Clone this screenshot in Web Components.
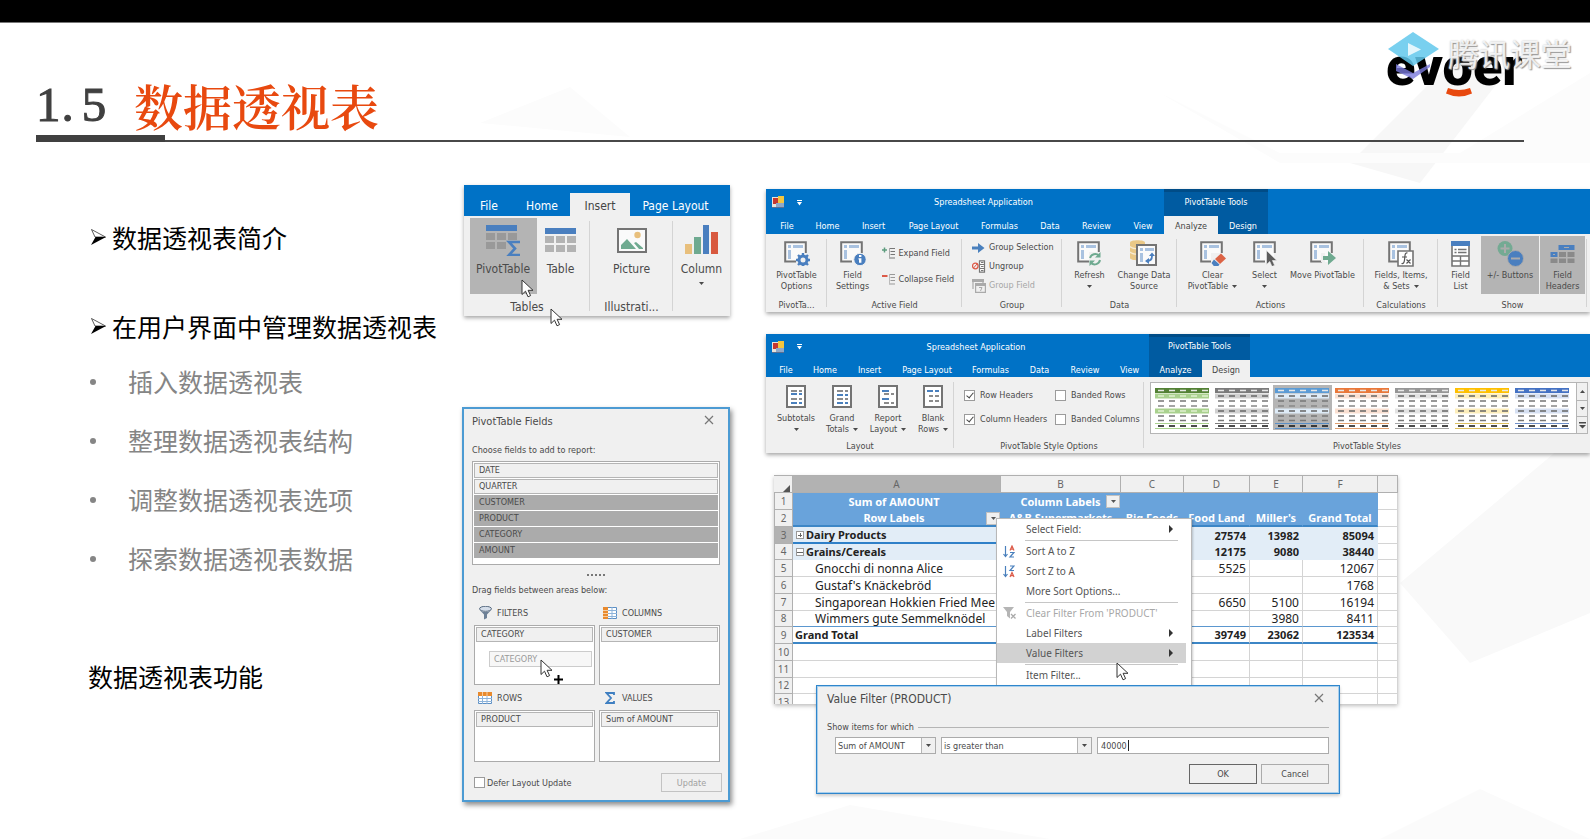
<!DOCTYPE html>
<html lang="zh-CN">
<head>
<meta charset="utf-8">
<meta name="viewport" content="width=device-width, initial-scale=1">
<title>1.5 数据透视表</title>
<style>
  html, body { margin: 0; min-height: 100%; background: #fff; }
  body { font-family: "Noto Sans CJK SC", "Noto Sans", sans-serif; }
</style>
</head>
<body>
<course-slide>
  <slide-title slot="title" number="1.5">数据透视表</slide-title>
  <brand-mark slot="brand"></brand-mark>
  <topic-list slot="topics"></topic-list>

  <ribbon-window slot="middle" class="compact" plain>
    <ribbon-tab slot="tabs" style="width:50px">File</ribbon-tab>
    <ribbon-tab slot="tabs" style="width:56px">Home</ribbon-tab>
    <ribbon-tab slot="tabs" style="width:60px" active>Insert</ribbon-tab>
    <ribbon-tab slot="tabs" style="width:91px">Page Layout</ribbon-tab>
    <ribbon-group caption="Tables" style="width:126px">
      <ribbon-button icon="big-pivot" style="width:67px" pressed>PivotTable</ribbon-button>
      <ribbon-button icon="big-table" style="width:48px">Table</ribbon-button>
    </ribbon-group>
    <ribbon-group caption="Illustrati..." style="width:83px">
      <ribbon-button icon="picture" style="width:70px">Picture</ribbon-button>
    </ribbon-group>
    <ribbon-group last caption="" style="width:57px">
      <ribbon-button icon="column" style="width:57px" arrow="below">Column</ribbon-button>
    </ribbon-group>
  </ribbon-window>
  <field-pane slot="middle"></field-pane>

  <ribbon-window slot="right" class="analyze" heading="Spreadsheet Application">
    <ribbon-tab slot="tabs" style="width:36px">File</ribbon-tab>
    <ribbon-tab slot="tabs" style="width:45px">Home</ribbon-tab>
    <ribbon-tab slot="tabs" style="width:47px">Insert</ribbon-tab>
    <ribbon-tab slot="tabs" style="width:73px">Page Layout</ribbon-tab>
    <ribbon-tab slot="tabs" style="width:59px">Formulas</ribbon-tab>
    <ribbon-tab slot="tabs" style="width:42px">Data</ribbon-tab>
    <ribbon-tab slot="tabs" style="width:51px">Review</ribbon-tab>
    <ribbon-tab slot="tabs" style="width:42px">View</ribbon-tab>
    <ribbon-tab slot="context" style="width:54px" active>Analyze</ribbon-tab>
    <ribbon-tab slot="context" style="width:50px">Design</ribbon-tab>
    <ribbon-group caption="PivotTa..." style="width:61px">
      <ribbon-button icon="options" style="width:58px">PivotTable<br>Options</ribbon-button>
    </ribbon-group>
    <ribbon-group caption="Active Field" style="width:135px">
      <ribbon-button icon="settings" style="width:50px">Field<br>Settings</ribbon-button>
      <ribbon-stack style="width:84px">
        <ribbon-link icon="expand">Expand Field</ribbon-link>
        <ribbon-link icon="collapse">Collapse Field</ribbon-link>
      </ribbon-stack>
    </ribbon-group>
    <ribbon-group caption="Group" style="width:100px">
      <ribbon-stack dense style="width:90px">
        <ribbon-link icon="group-sel">Group Selection</ribbon-link>
        <ribbon-link icon="ungroup">Ungroup</ribbon-link>
        <ribbon-link icon="group-field" off>Group Field</ribbon-link>
      </ribbon-stack>
    </ribbon-group>
    <ribbon-group caption="Data" style="width:115px">
      <ribbon-button icon="refresh" arrow="below" style="width:49px">Refresh</ribbon-button>
      <ribbon-button icon="source" style="width:60px">Change Data<br>Source</ribbon-button>
    </ribbon-group>
    <ribbon-group caption="Actions" style="width:187px">
      <ribbon-button icon="clear" arrow="inline" style="width:68px">Clear<br>PivotTable</ribbon-button>
      <ribbon-button icon="select" arrow="below" style="width:36px">Select</ribbon-button>
      <ribbon-button icon="move" style="width:80px">Move PivotTable</ribbon-button>
    </ribbon-group>
    <ribbon-group caption="Calculations" style="width:74px">
      <ribbon-button icon="calc" arrow="inline" style="width:72px">Fields, Items,<br>&amp; Sets</ribbon-button>
    </ribbon-group>
    <ribbon-group caption="Show" style="width:149px">
      <ribbon-button icon="field-list" style="width:41px">Field<br>List</ribbon-button>
      <ribbon-button icon="plus-minus" style="width:58px" pressed>+/- Buttons</ribbon-button>
      <ribbon-button icon="headers" style="width:45px; margin-left:1px" pressed>Field<br>Headers</ribbon-button>
    </ribbon-group>
  </ribbon-window>

  <ribbon-window slot="right" class="design" heading="Spreadsheet Application">
    <ribbon-tab slot="tabs" style="width:34px">File</ribbon-tab>
    <ribbon-tab slot="tabs" style="width:44px">Home</ribbon-tab>
    <ribbon-tab slot="tabs" style="width:45px">Insert</ribbon-tab>
    <ribbon-tab slot="tabs" style="width:70px">Page Layout</ribbon-tab>
    <ribbon-tab slot="tabs" style="width:57px">Formulas</ribbon-tab>
    <ribbon-tab slot="tabs" style="width:41px">Data</ribbon-tab>
    <ribbon-tab slot="tabs" style="width:50px">Review</ribbon-tab>
    <ribbon-tab slot="tabs" style="width:39px">View</ribbon-tab>
    <ribbon-tab slot="context" style="width:53px">Analyze</ribbon-tab>
    <ribbon-tab slot="context" style="width:48px" active>Design</ribbon-tab>
    <ribbon-group caption="Layout" style="width:188px">
      <ribbon-button icon="subtotals" arrow="below" style="width:54px">Subtotals</ribbon-button>
      <ribbon-button icon="grand" arrow="inline" style="width:38px">Grand<br>Totals</ribbon-button>
      <ribbon-button icon="report" arrow="inline" style="width:54px">Report<br>Layout</ribbon-button>
      <ribbon-button icon="blank" arrow="inline" style="width:36px">Blank<br>Rows</ribbon-button>
    </ribbon-group>
    <ribbon-group caption="PivotTable Style Options" style="width:190px">
      <style-options></style-options>
    </ribbon-group>
    <ribbon-group last grow caption="PivotTable Styles">
      <style-gallery></style-gallery>
    </ribbon-group>
  </ribbon-window>

  <pivot-sheet slot="right"></pivot-sheet>
</course-slide>

<script>
const UI = '"DejaVu Sans Condensed","DejaVu Sans",sans-serif';
const RESET = `:host,*{box-sizing:border-box} button{font:inherit;color:inherit;background:none;border:0;padding:0;margin:0;cursor:default}`;

/* Registers an element whose shadow root is cloned from a template. */
function component(name, css, html, init) {
  const tpl = document.createElement('template');
  tpl.innerHTML = `<style>${RESET}${css}</style>${typeof html === 'string' ? html : ''}`;
  customElements.define(name, class extends HTMLElement {
    constructor() {
      super();
      this.attachShadow({ mode: 'open' }).append(tpl.content.cloneNode(true));
    }
    connectedCallback() {
      if (this.ready) return;
      this.ready = true;
      if (typeof html === 'function') this.shadowRoot.innerHTML += html(this);
      if (init) init(this);
    }
  });
}

/* ---------- icons ---------- */
const sheetBase = `<path d="M1 1h20v20H1z" fill="#fafafa"/><path d="M12 20.5H1.2V1.2h20.6V12" fill="none" stroke="#747474" stroke-width="2"/><path d="M4 4h3v3H4zM9 4h10v3H9zM4 9h3v9H4z" fill="#a9c2e0"/>`;
const page = rows => `<path d="M1 1h18v21H1z" fill="#fff" stroke="#747474" stroke-width="2"/>${rows}`;
const bars = (y, c, x = 5, w = 6, x2 = 13, w2 = 3) => `<path d="M${x} ${y}h${w}v2h-${w}zM${x2} ${y}h${w2}v2h-${w2}z" fill="${c}"/>`;
const B = '#4a80bd', G = '#8c8c8c';
const ICONS = {
  'big-pivot': [35, 32, `<path d="M0 1h31v6H0z" fill="#4a7fbf"/><path d="M0 9h9v7H0zM11 9h9v7h-9zM22 9h9v7h-9zM0 18h9v7H0zM11 18h9v7h-9z" fill="#999"/><path d="M34 18H23l6 6.5-6 6.500h11" fill="none" stroke="#4a7fbf" stroke-width="2.600"/>`],
  'big-table': [31, 32, `<path d="M0 4h31v6H0z" fill="#4a7fbf"/><path d="M0 12h9v7H0zM11 12h9v7h-9zM22 12h9v7h-9zM0 21h9v7H0zM11 21h9v7h-9zM22 21h9v7h-9z" fill="#b3b3b3"/>`],
  'picture': [30, 32, `<path d="M1 5h28v23H1z" fill="#fafafa" stroke="#747474" stroke-width="2"/><circle cx="20.500" cy="11" r="3.200" fill="#e8bf7c"/><path d="M4 25v-4l6-6 9 10zM17 19l2-1 7 6v1h-4z" fill="#6faa90"/>`],
  'column': [34, 32, `<path d="M0 20h7v10H0z" fill="#e8bf7c"/><path d="M9 13h7v17H9z" fill="#6faa90"/><path d="M18 1h6v29h-6z" fill="#4a7fbf"/><path d="M26 8h7v22h-7z" fill="#d8593f"/>`],
  'options': [26, 25, sheetBase + `<circle cx="19" cy="19" r="4" fill="#f0f0f0" stroke="#4a7fbf" stroke-width="3"/><path d="M19 12v3M19 23v3M12 19h3M23 19h3M14 14l2 2M22 22l2 2M24 14l-2 2M14 24l2-2" stroke="#4a7fbf" stroke-width="2.400"/>`],
  'settings': [26, 25, sheetBase + `<circle cx="20" cy="18.500" r="6.200" fill="#4a7fbf" stroke="#f0f0f0"/><path d="M19 14h2.400v2H19zM18.500 17.300h2.900v4.500H19v-3.400h-.5z" fill="#fff"/>`],
  'refresh': [25, 25, sheetBase + `<path d="M12 11h13v14H12z" fill="#f0f0f0"/><path d="M13 17a5.500 5.500 0 0 1 9-2.500M23 19a5.500 5.500 0 0 1-9 3" fill="none" stroke="#6faa90" stroke-width="2"/><path d="M23.500 11v5.500H18zM12.500 25v-5.500H18z" fill="#6faa90"/>`],
  'source': [28, 27, `<path d="M0 2.500C0-.5 15-.5 15 2.500V18c0 3-15 3-15 0z" fill="#eac886"/><path d="M0 6.500c3 3 12 3 15 0M0 12c3 3 12 3 15 0" fill="none" stroke="#f7ecd6" stroke-width="1.500"/><path d="M7 5h19v20H7z" fill="#fafafa" stroke="#747474" stroke-width="2"/><path d="M10 8h3v3h-3zM15 8h9v3h-9zM10 13h3v9h-3z" fill="#a9c2e0"/><path d="M17 21c4 0 5-2 5-5" fill="none" stroke="#4a7fbf" stroke-width="1.800"/><path d="M19 16h6l-3-3.500zM19 18v6l-4-3z" fill="#4a7fbf"/>`],
  'clear': [26, 25, sheetBase + `<path d="M11 12h14v13H11z" fill="#f0f0f0"/><path d="M15 18l6-5.500 5 5-6 5.500z" fill="#dc6345"/><path d="M14 18.500l5.500 5-2 2.500h-3L11.500 22z" fill="#4a7fbf"/>`],
  'select': [24, 25, sheetBase + `<path d="M13.500 9.500v14l3.300-3 2.200 5 2.600-1.200-2.200-4.800h4.400z" fill="#5d5d5d" stroke="#f0f0f0" stroke-width=".6"/>`],
  'move': [26, 25, sheetBase + `<path d="M11 12h4v9h-4z" fill="#f0f0f0"/><path d="M13 15h5v-5l8 7-8 7v-5h-5z" fill="#6faa90"/>`],
  'calc': [26, 26, sheetBase + `<path d="M10 10h15v15H10z" fill="#fff" stroke="#747474" stroke-width="1.600"/><path d="M19.500 12c-3-1-2.500 4-3 7-.3 2.500-1 4-3 3.500M14 16h5M18.500 18.500l4 4M22.500 18.500l-4 4" fill="none" stroke="#555" stroke-width="1.200"/>`],
  'field-list': [19, 26, `<path d="M1 1h17v24H1z" fill="#fff" stroke="#747474" stroke-width="1.600"/><path d="M0 0h19v5H0z" fill="#4a7fbf"/><path d="M3.500 8.500h2M7 8.500h8.500M3.500 11.500h2M7 11.500h8.500" stroke="#747474" stroke-width="1.400"/><path d="M1 15h17M1 20h17M9.500 15v10" stroke="#747474" stroke-width="1.400"/>`],
  'plus-minus': [27, 26, `<circle cx="8" cy="7.500" r="7.500" fill="#74aa93"/><path d="M8 3v9M3.500 7.500h9" stroke="#ababab" stroke-width="2"/><circle cx="18.500" cy="17.500" r="8" fill="#4a7fbf" stroke="#ababab"/><path d="M14 17.500h9" stroke="#ababab" stroke-width="2"/>`],
  'headers': [25, 24, `<path d="M8.500 3h16v5h-16zM.5 10h7v5h-7z" fill="#4a7fbf"/><path d="M14 5.500h5M3 12.500h2" stroke="#ababab"/><path d="M9 10h7v5H9zM17.500 10h7v5h-7zM.5 16.500h7V21h-7zM9 16.500h7V21H9zM17.500 16.500h7V21h-7z" fill="#8a8a8a"/>`],
  'expand': [13, 13, `<path d="M2.500 .5v5M0 3h5" stroke="#5d9c7e" stroke-width="1.500"/><path d="M7 1.500h6M8.500 4.500H13M8.500 7.500H13M7 11h6" stroke="#777"/><path d="M7.500 1v10" stroke="#aaa"/>`],
  'collapse': [13, 13, `<path d="M0 3h5.500" stroke="#dc5a48" stroke-width="2"/><path d="M7 1.500h6M8.500 4.500H13M8.500 7.500H13M7 11h6" stroke="#999"/><path d="M7.500 1v10" stroke="#bbb"/>`],
  'group-sel': [13, 12, `<path d="M0 4.500h6V1l6.500 5L6 11V7.500H0z" fill="#4a80bd"/>`],
  'ungroup': [14, 13, `<circle cx="3.300" cy="6" r="2.800" fill="none" stroke="#dc5a48" stroke-width="1.300"/><path d="M1.500 8l3.500-4" stroke="#dc5a48"/><path d="M7.500.8h5v11.400h-5z" fill="#fff" stroke="#777" stroke-width="1.200"/><path d="M8 4.500h4.500M8 8.500h4.500M9 2.500h2.500M9 6.500h2.500M9 10.500h2.500" stroke="#777"/>`],
  'group-field': [14, 14, `<path d="M1 10V1h10v3" fill="none" stroke="#aaa" stroke-width="1.200"/><path d="M0 0h12v3H0zM3 4h11v3H3z" fill="#aaa"/><path d="M3.600 5h9.800v8.400H3.600z" fill="none" stroke="#aaa" stroke-width="1.200"/><path d="M7 8.500h3l-1.500 3.500" fill="none" stroke="#aaa"/>`],
  'subtotals': [20, 23, page(bars(5, G) + bars(8, B) + bars(13, G) + bars(17, B))],
  'grand': [20, 23, page(bars(5, G) + bars(9, B) + bars(13, G) + bars(17, B))],
  'report': [20, 23, page(bars(5, B, 4, 7, 4, 7) + bars(8, G, 6, 5, 13, 3) + bars(13, B, 4, 7, 4, 7) + bars(17, G, 6, 5, 13, 3))],
  'blank': [20, 23, page(bars(5, B, 4, 6, 12, 4) + bars(10, G, 6, 4, 12, 4) + bars(15, G, 6, 4, 12, 4))],
  'app': [13, 13, `<path d="M0 1h7v10H0z" fill="#e9e4da"/><path d="M1 2h5v6H1z" fill="#c6372f"/><path d="M6 0h6v7H6z" fill="#f3c63f"/><path d="M4 7h8v5H4z" fill="#8fa9c9"/><path d="M0 11h12v1H0z" fill="#5a6f92"/>`],
  'qat': [5, 6, `<path d="M0 0h5v1H0zM0 2h5L2.500 5.500z" fill="#fff"/>`],
  'funnel': [13, 14, `<ellipse cx="6.500" cy="2.800" rx="6" ry="2.500" fill="#d5deea" stroke="#56697f"/><path d="M.7 4C4 6.500 9 6.500 12.300 4L8 8.500V12l-3 1.500v-5z" fill="#6d8096"/>`],
  'cols': [14, 12, `<path d="M.5.5h13v11H.5z" fill="#fff" stroke="#5c8fc4"/><path d="M0 0h5v12H0z" fill="#e88a2e"/><path d="M0 3.500h5M0 6.500h5M0 9.500h5" stroke="#f7cda0"/><path d="M9 0v12M5 3.500h9M5 6.500h9M5 9.500h9" stroke="#8db3da"/>`],
  'rows': [14, 12, `<path d="M.5.5h13v11H.5z" fill="#fff" stroke="#5c8fc4"/><path d="M0 0h14v4H0z" fill="#e88a2e"/><path d="M4.500 0v4M9 0v4" stroke="#f7cda0"/><path d="M4.500 4v8M9 4v8M0 6.500h14M0 9.500h14" stroke="#8db3da"/>`],
  'sigma': [10, 12, `<path d="M9 3V1H1.500L6 6l-4.500 5H9V9" fill="none" stroke="#3f7fc1" stroke-width="1.800"/>`],
  'close': [10, 10, `<path d="M1 1l8 8M9 1L1 9" stroke="#777" stroke-width="1.200"/>`],
  'sort-az': [12, 13, `<path d="M2.500 1v10M.5 9l2 2.500 2-2.500" fill="none" stroke="#4a80bd" stroke-width="1.200"/><path d="M7 5.500L9 1l2 4.500M7.700 4.200h2.600" fill="none" stroke="#dc5a48" stroke-width="1.200"/><path d="M7 7.500h4L7 12h4" fill="none" stroke="#4a80bd" stroke-width="1.200"/>`],
  'sort-za': [12, 13, `<path d="M2.500 1v10M.5 9l2 2.500 2-2.500" fill="none" stroke="#4a80bd" stroke-width="1.200"/><path d="M7 1h4L7 5.500h4" fill="none" stroke="#4a80bd" stroke-width="1.200"/><path d="M7 12l2-4.500 2 4.500M7.700 10.700h2.600" fill="none" stroke="#dc5a48" stroke-width="1.200"/>`],
  'clear-filter': [13, 12, `<path d="M0 0h11L7 5v6.500L4 9V5z" fill="#b5b5b5"/><path d="M8 7l4.500 4.500M12.500 7L8 11.500" stroke="#aaa" stroke-width="1.300"/>`],
  'right': [4, 8, `<path d="M0 0l4 4-4 4z" fill="#333"/>`],
  'down': [5, 3, `<path d="M0 0h5L2.500 3z" fill="currentColor"/>`],
  'up': [5, 3, `<path d="M0 3h5L2.500 0z" fill="currentColor"/>`],
  'more': [7, 7, `<path d="M0 0h7v1.500H0zM0 3h7L3.500 6.500z" fill="currentColor"/>`],
  'pointer': [13, 19, `<path d="M1 1v14.500l3.500-3.300 2.500 5.600 2.600-1.200-2.500-5.300H12z" fill="#fff" stroke="#333"/>`],
  'arrowhead': [17, 18, `<path d="M1.500 1.500L15.500 9 5 9z" fill="#fff" stroke="#333" stroke-width=".8"/><path d="M5.500 9H16L1 17z" fill="#000"/>`]
};
component('ui-icon', `:host{display:inline-block;line-height:0;flex:none} svg{display:block}`,
  el => { const [w, h, d] = ICONS[el.getAttribute('name')]; return `<svg width="${w}" height="${h}" viewBox="0 0 ${w} ${h}" aria-hidden="true">${d}</svg>`; });

/* ---------- slide frame ---------- */
component('course-slide', `
  :host{display:block;position:relative;min-height:100vh;overflow:hidden;background:#fff}
  .bar{height:23px;background:#000;border-bottom:1px solid #777}
  .facets{position:absolute;inset:23px 0 0;width:100%;height:calc(100% - 23px);z-index:0}
  .page{position:relative}
  .body{display:flex;align-items:flex-start;padding:43px 0 28px 88px}
  .topics{flex:0 0 376px}
  .middle{flex:0 0 266px;display:flex;flex-direction:column;gap:91px}
  .right{flex:1 1 0;min-width:0;margin:4px 0 0 36px;display:flex;flex-direction:column;gap:22px}
`, `
  <div class="bar"></div>
  <svg class="facets" viewBox="0 0 1590 816" preserveAspectRatio="none" aria-hidden="true">
    <path d="M1350 140l110-110 45 20-85 110z" fill="#f7f7f7"/><path d="M1160 70l120 60h180l130-80v90H1280z" fill="#fcfcfc"/>
    <path d="M480 100l90-36 60 50z" fill="#fcfcfc"/><path d="M1400 560l190-160v190l-120 50z" fill="#f9f9f9"/>
    <path d="M740 816l110-34 200 34zM1380 816l100-50 110 50z" fill="#fbfbfb"/>
  </svg>
  <div class="page">
    <slot name="title"></slot>
    <slot name="brand"></slot>
    <div class="body">
      <div class="topics"><slot name="topics"></slot></div>
      <div class="middle"><slot name="middle"></slot></div>
      <div class="right"><slot name="right"></slot></div>
    </div>
  </div>`);

component('slide-title', `
  :host{display:block;padding:48px 66px 0 36px}
  h1{margin:0;height:64px;font-weight:600;font-size:49px;line-height:64px;padding-top:4px;color:#e8490f;display:flex;align-items:center;
     font-family:"Noto Serif CJK SC","Liberation Serif","Noto Sans CJK SC",serif}
  .n{color:#404040;width:98px;white-space:pre;font-family:"Liberation Serif",serif;font-weight:400;-webkit-text-stroke:1px #404040}
  .dot{margin:0 8px 0 1px}
  .rule{height:7px;border-bottom:2px solid #484848}
  .rule i{display:block;width:129px;height:7px;background:#404040}
`, el => { const [a, b] = el.getAttribute('number').split('.'); return `<h1><span class="n">${a}<span class="dot">.</span>${b}</span><slot></slot></h1><div class="rule"><i></i></div>`; });

component('brand-mark', `
  :host{position:absolute;top:8px;right:12px;width:192px;height:70px}
  .word{position:absolute;left:0;top:3px;font:900 54px/66px Roboto,sans-serif;color:#000}
  svg{position:absolute;left:2px;top:0}
  .mark{position:absolute;left:62px;top:2px;font:400 31px/40px "Noto Sans CJK SC",sans-serif;color:rgba(255,255,255,.82);text-shadow:1px 1px 1px #999,0 0 2px #bbb;white-space:nowrap}
`, `
  <span class="word">evoer</span>
  <svg width="60" height="68" viewBox="0 0 60 68" aria-hidden="true">
    <path d="M8 33l17 9 17-9v3L25 48 8 40z" fill="#7b7bdc" opacity=".8"/>
    <path d="M0 18L25 1l26 17-26 17z" fill="#62c8ec" opacity=".85"/>
    <path d="M20 12l13 6.500L20 25z" fill="#fff" opacity=".8"/>
  </svg>
  <svg width="100" height="70" viewBox="0 0 100 70" aria-hidden="true"><path d="M60 57q11 4 22 0l2 5.500q-13 6-26 0z" fill="#e8490f"/></svg>
  <span class="mark">腾讯课堂</span>`);

component('topic-list', `
  :host{display:block;padding-top:34px;font:400 25px/36px "Noto Sans CJK SC",sans-serif;color:#000}
  ul{list-style:none;margin:0;padding:0}
  .top > li + li{margin-top:53px}
  .head{display:flex;align-items:center;gap:5px;margin-left:2px}
  .sub{margin-top:8px;color:#858585;line-height:59px}
  .sub li{display:flex;align-items:center;gap:32px;padding-left:2px}
  .sub li::before{content:"";width:6px;height:6px;border-radius:50%;background:#858585;flex:none}
  p{margin:70px 0 0}
`, `
  <ul class="top">
    <li><span class="head"><ui-icon name="arrowhead"></ui-icon><span>数据透视表简介</span></span></li>
    <li><span class="head"><ui-icon name="arrowhead"></ui-icon><span>在用户界面中管理数据透视表</span></span>
      <ul class="sub"><li>插入数据透视表</li><li>整理数据透视表结构</li><li>调整数据透视表选项</li><li>探索数据透视表数据</li></ul>
    </li>
  </ul>
  <p>数据透视表功能</p>`);

/* ---------- ribbon ---------- */
component('ribbon-window', `
  :host{--fs:9px;--title:27px;--tab:18px;--content:62px;--icon:25px;--pad:5px;--gap:4px;--lh:11px;--cap:16px;
        display:block;position:relative;font:var(--fs)/var(--lh) ${UI};color:#4a4a4a;background:#f0f0f0;box-shadow:0 2px 4px rgba(0,0,0,.35)}
  :host(.design){--title:26px;--tab:17px;--content:60px}
  :host(.compact){--fs:12px;--tab:31px;--content:80px;--icon:32px;--pad:6px;--gap:6px;--lh:14px;--cap:20px}
  .top{display:flex;background:#0072c6;color:#fff}
  .head{height:var(--title);display:flex;align-items:center}
  .qat{width:37px;padding-left:6px;display:flex;gap:12px;align-items:center}
  .title{flex:1;text-align:center}
  .tabs{display:flex;height:var(--tab);padding-left:3px}
  .ctx{background:#005ba1;border-top:3px solid #004c87}
  .ctx .head{height:calc(var(--title) - 3px);justify-content:center;padding-bottom:4px}
  .ctx .tabs{padding:0}
  :host([plain]) .head,:host([plain]) .ctx{display:none}
  :host([plain]) .tabs{padding:8px 0 0 0}
  .body{display:flex}
  .pointers ui-icon{position:absolute}
  .pointers .a{left:57px;top:94px}.pointers .b{left:86px;top:123px}
  :host(:not([plain])) .pointers{display:none}
`, el => `
  <div class="top">
    <div><div class="head"><span class="qat"><ui-icon name="app"></ui-icon><ui-icon name="qat"></ui-icon></span><span class="title">${el.getAttribute('heading') || ''}</span></div>
      <div class="tabs"><slot name="tabs"></slot></div></div>
    <div class="ctx">${el.hasAttribute('plain') ? '' : '<div class="head">PivotTable Tools</div>'}<div class="tabs"><slot name="context"></slot></div></div>
  </div>
  <div class="body"><slot></slot></div>
  <div class="pointers">${el.hasAttribute('plain') ? '<ui-icon class="a" name="pointer"></ui-icon><ui-icon class="b" name="pointer"></ui-icon>' : ''}</div>`);

component('ribbon-tab', `
  :host{display:block;flex:none}
  button{width:100%;height:100%;text-align:center;white-space:nowrap;padding-top:3px}
  :host([active]) button{background:#f0f0f0;color:#444}
`, `<button type="button"><slot></slot></button>`);

component('ribbon-group', `
  :host{display:flex;flex:none;flex-direction:column;background:linear-gradient(#d4d4d4,#d4d4d4) right 5px/1px calc(100% - 10px) no-repeat}
  :host([last]){background:none}
  :host([grow]){flex:1 1 0;min-width:0}
  .c{display:flex;justify-content:center;height:var(--content)}
  .cap{height:var(--cap);line-height:var(--cap);padding-top:1px;text-align:center;white-space:nowrap}
`, el => `<div class="c"><slot></slot></div><div class="cap">${el.getAttribute('caption')}</div>`);

component('ribbon-button', `
  :host{display:block;flex:none}
  button{display:flex;flex-direction:column;align-items:center;width:100%;height:calc(100% - 4px);margin-top:2px;padding-top:var(--pad);white-space:nowrap}
  :host([pressed]) button{background:#b4b4b4}
  .i{height:var(--icon);margin-bottom:var(--gap);display:flex;align-items:center}
  .t ui-icon{vertical-align:middle;margin-left:4px}
  .d{height:var(--lh);display:flex;align-items:center}
`, el => {
  const a = el.getAttribute('arrow');
  return `<button type="button"><span class="i"><ui-icon name="${el.getAttribute('icon')}"></ui-icon></span><span class="t"><slot></slot>${a === 'inline' ? '<ui-icon name="down"></ui-icon>' : ''}</span>${a === 'below' ? '<span class="d"><ui-icon name="down"></ui-icon></span>' : ''}</button>`;
});

component('ribbon-stack', `
  :host{display:grid;grid-auto-rows:26px;padding:6px 0 0 4px;flex:none}
  :host([dense]){grid-auto-rows:19px;padding:4px 0 0 5px}
`, `<slot></slot>`);

component('ribbon-link', `
  :host{display:flex}
  button{display:flex;align-items:center;white-space:nowrap}
  .i{width:17px;display:flex}
  :host([off]) button{color:#a6a6a6}
`, el => `<button type="button"><span class="i"><ui-icon name="${el.getAttribute('icon')}"></ui-icon></span><slot></slot></button>`);

const CHECK = `
  input[type=checkbox]{appearance:none;width:11px;height:11px;margin:0;border:1px solid #9b9b9b;background:#fff;position:relative;flex:none}
  input[type=checkbox]:checked::before{content:"";position:absolute;left:3px;top:0;width:3px;height:6px;border:solid #444;border-width:0 1px 1px 0;transform:rotate(40deg)}`;

component('style-options', `${CHECK}
  :host{display:grid;grid-template-columns:91px 89px;grid-auto-rows:24px;padding:6px 0 0 10px;width:190px}
  label{display:flex;align-items:center;gap:5px;white-space:nowrap}
`, `
  <label><input type="checkbox" checked>Row Headers</label><label><input type="checkbox">Banded Rows</label>
  <label><input type="checkbox" checked>Column Headers</label><label><input type="checkbox">Banded Columns</label>`);

component('style-gallery', `
  :host{display:flex;flex:1;min-width:0;height:52px;margin:5px 2px 0 6px;border:1px solid #b5b5b5;background:#fff}
  .list{flex:1;min-width:0;display:flex;gap:1px;padding:2px 0 0 2px;overflow:hidden}
  .list button{width:59px;height:45px;flex:none;padding:3px 2px 0}
  .list button.on{background:#b5b5b5}
  .scroll{width:11px;flex:none;display:grid;grid-template-rows:1fr 1fr 1fr;border-left:1px solid #b5b5b5;background:#f0f0f0}
  .scroll button{display:flex;align-items:center;justify-content:center}
  .scroll button + button{border-top:1px solid #b5b5b5}
  svg{display:block}
`, () => {
  const themes = [['green', '#538135', '#a9d18e', '#a9d18e'], ['dark grey', '#7b7b7b', '#d0d0d0', '#7b7b7b'], ['blue', '#5b9bd5', '#deebf7', '#5b8fc5'], ['orange', '#e9783a', '#fae0d2', '#e0a070'], ['grey', '#969696', '#e3e3e3', '#a5a5a5'], ['gold', '#ffc000', '#fdeebb', '#dcc060'], ['indigo', '#4472c4', '#d6e0f2', '#7090c8']];
  const thumb = ([name, h, band, line], i) => {
    const dash = (y, c) => `<path d="M3 ${y}h50" stroke="${c}" stroke-dasharray="6 5" stroke-width="1.500"/>`;
    const bandBlock = y => `<path d="M0 ${y - 2.500}h54v5H0z" fill="${band}"/>`;
    return `<button type="button" class="${i === 2 ? 'on' : ''}" aria-label="${name}"><svg width="55" height="42" viewBox="0 0 55 42" aria-hidden="true">
      <path d="M0 0h54v5H0z" fill="${h}"/>${dash(2.500, '#e8e8e8')}${bandBlock(8)}${dash(8, i ? '#666' : '#dff0d0')}${dash(13, '#777')}${dash(18, '#888')}${bandBlock(23)}${dash(23, i ? '#666' : '#dff0d0')}
      ${dash(28, '#777')}${dash(32.500, '#777')}<path d="M0 35.500h54M0 40.500h54" stroke="${line}"/>${dash(38, '#111')}</svg></button>`;
  };
  return `<div class="list">${themes.map(thumb).join('')}</div>
  <div class="scroll"><button type="button" aria-label="Up"><ui-icon name="up"></ui-icon></button><button type="button" aria-label="Down"><ui-icon name="down"></ui-icon></button><button type="button" aria-label="More"><ui-icon name="more"></ui-icon></button></div>`;
});

/* ---------- field list pane ---------- */
component('field-pane', `${CHECK}
  :host{display:block;position:relative;margin-left:-2px;width:268px;border:2px solid #4c9bd3;background:#f0f0f0;padding:6px 8px 8px;font:9px/12px ${UI};color:#4a4a4a;box-shadow:2px 3px 5px rgba(0,0,0,.45)}
  header{display:flex;justify-content:space-between;align-items:center;font-size:11px;line-height:13px;padding-right:6px}
  p{margin:16px 0 0}
  ul{list-style:none;margin:0;padding:1px;border:1px solid #ababab;background:#fff}
  li{height:15px;line-height:13px;padding-left:4px;border:1px solid #b5b5b5;background:#f0f0f0}
  li + li{margin-top:1px}
  .all{margin-top:5px;height:104px}
  .used{background:#ababab;border-color:#ababab}
  .grip{display:flex;justify-content:center;gap:2px;margin:9px 0 0}
  .grip i{width:2px;height:2px;background:#777}
  .grip + p{margin-top:8px}
  .areas{display:grid;grid-template-columns:1fr 1fr;column-gap:4px;margin:5px 0 0 2px}
  .areas section{display:flex;flex-direction:column}
  h3{margin:0;height:24px;display:flex;align-items:center;gap:5px;font:inherit;padding-left:4px}
  h3 ui-icon{width:14px;display:flex;justify-content:center}
  .areas section:nth-child(n+3) h3{height:25px}
  .areas section:nth-child(-n+2) ul{height:60px}
  .areas section:nth-child(n+3) ul{height:52px}
  .foot{display:flex;justify-content:space-between;align-items:center;margin:11px -2px 0 2px}
  label{display:flex;align-items:center;gap:2px}
  .foot button{width:61px;height:19px;border:1px solid #c3c3c3;color:#a0a0a0}
  .ghost{position:absolute;left:25px;top:242px;width:103px;height:16px;border:1px solid #ccc;background:rgba(245,245,245,.8);color:#999;padding-left:4px;line-height:14px}
  .ptr{position:absolute;left:76px;top:250px}
  .plus{position:absolute;left:90px;top:266px}
`, `
  <header><span>PivotTable Fields</span><button type="button" aria-label="Close"><ui-icon name="close"></ui-icon></button></header>
  <p>Choose fields to add to report:</p>
  <ul class="all"><li>DATE</li><li>QUARTER</li><li class="used">CUSTOMER</li><li class="used">PRODUCT</li><li class="used">CATEGORY</li><li class="used">AMOUNT</li></ul>
  <div class="grip"><i></i><i></i><i></i><i></i><i></i></div>
  <p>Drag fields between areas below:</p>
  <div class="areas">
    <section><h3><ui-icon name="funnel"></ui-icon>FILTERS</h3><ul><li>CATEGORY</li></ul></section>
    <section><h3><ui-icon name="cols"></ui-icon>COLUMNS</h3><ul><li>CUSTOMER</li></ul></section>
    <section><h3><ui-icon name="rows"></ui-icon>ROWS</h3><ul><li>PRODUCT</li></ul></section>
    <section><h3><ui-icon name="sigma"></ui-icon>VALUES</h3><ul><li>Sum of AMOUNT</li></ul></section>
  </div>
  <div class="foot"><label><input type="checkbox">Defer Layout Update</label><button type="button" disabled>Update</button></div>
  <div class="ghost">CATEGORY</div>
  <ui-icon class="ptr" name="pointer"></ui-icon>
  <svg class="plus" width="9" height="9" aria-hidden="true"><path d="M4.500 0v9M0 4.500h9" stroke="#000" stroke-width="2"/></svg>`);

/* ---------- worksheet ---------- */
component('pivot-sheet', `
  :host{display:block;position:relative;width:624px;margin-left:8px;height:229px;font:12px/16px "Noto Sans",sans-serif;color:#222}
  .clip{height:229px;overflow:hidden;background:#fff;box-shadow:0 2px 4px rgba(0,0,0,.25)}
  table{border-collapse:separate;border-spacing:0;table-layout:fixed;width:624px}
  th,td{padding:0 3px 0 0;height:17px;line-height:15px;border:solid #d4d4d4;border-width:0 1px 1px 0;text-align:right;white-space:nowrap;overflow:hidden;font-weight:400}
  tr:nth-child(4n) > *{height:16px}
  thead th,tbody th{background:#f0f0f0;color:#666;text-align:center;padding:0;font-size:10px;border-color:#b0b0b0}
  thead th{height:18px;border-top:1px solid #b0b0b0}
  tbody th{border-left:1px solid #b0b0b0}
  .sel{background:#b2b2b2!important}
  td:nth-child(2){text-align:left;padding-left:22px;border-left:0}
  .b td{font-weight:700;font-size:11px}
  .b td:nth-child(2){padding-left:2px}
  .h td{background:#69a3db;color:#fff;font-weight:700;font-size:11px;border-color:#69a3db;text-align:center;padding:0;position:relative}
  .h td:nth-child(2){padding:0 5px 0 0;text-align:center}
  .light td{background:#e2edf7;border-color:#e2edf7}
  .h td:last-child,.light td:last-child{background:#fff;border-color:#d4d4d4}
  .l td{border-bottom:2px solid #3c86c6}
  .l td:last-child{border-bottom:1px solid #d4d4d4}
  .l3 td:nth-child(2){border-bottom:2px solid #2f80c8}
  .l8 td:not(:last-child){border-bottom:1px solid #5b97cf}
  .box{display:inline-block;width:8px;height:8px;border:1px solid #999;margin:0 2px 0 1px;background:linear-gradient(#666,#666) center/6px 1px no-repeat #fff}
  .plus{background:linear-gradient(#666,#666) center/4px 1px no-repeat,linear-gradient(#666,#666) center/1px 4px no-repeat,#fff}
  .drop{position:absolute;right:0;top:2px;width:14px;height:13px;background:#f0f0f0;border:1px solid #c0c0c0;color:#555;display:flex;align-items:center;justify-content:center}
  filter-menu{position:absolute;left:222px;top:43px}
  value-filter-dialog{position:absolute;left:42px;top:210px}
  .ptr{position:absolute;left:342px;top:187px}
`, () => {
  const drop = `<button type="button" class="drop" aria-label="Filter"><ui-icon name="down"></ui-icon></button>`;
  const rows = [
    ['h', 'Sum of AMOUNT', 'Column Labels' + drop, '', '', '', ''],
    ['h l', 'Row Labels' + drop, 'A&amp;B Supermarkets', 'Big Foods', 'Food Land', "Miller's", 'Grand Total'],
    ['b light l3', '<span class="box plus"></span>Dairy Products', '', '', '27574', '13982', '85094'],
    ['b light', '<span class="box"></span>Grains/Cereals', '', '', '12175', '9080', '38440'],
    ['', 'Gnocchi di nonna Alice', '', '', '5525', '', '12067'],
    ['', "Gustaf's Knäckebröd", '', '', '', '', '1768'],
    ['', 'Singaporean Hokkien Fried Mee', '', '', '6650', '5100', '16194'],
    ['l8', 'Wimmers gute Semmelknödel', '', '', '', '3980', '8411'],
    ['b l', 'Grand Total', '', '', '39749', '23062', '123534'],
    ...Array(4).fill(['', '', '', '', '', '', ''])
  ];
  return `<div class="clip"><table>
    <colgroup><col style="width:19px"><col style="width:208px"><col style="width:120px"><col style="width:63px"><col style="width:66px"><col style="width:53px"><col style="width:75px"><col style="width:20px"></colgroup>
    <thead><tr><th><svg width="7" height="7" aria-hidden="true" style="vertical-align:bottom;margin-left:6px"><path d="M7 0v7H0z" fill="#555"/></svg></th><th class="sel">A</th><th>B</th><th>C</th><th>D</th><th>E</th><th>F</th><th></th></tr></thead>
    <tbody>${rows.map(([c, ...v], i) => `<tr class="${c}"><th class="${i === 2 ? 'sel' : ''}">${i + 1}</th>${v.map(x => `<td>${x}</td>`).join('')}<td></td></tr>`).join('')}</tbody>
  </table></div>
  <filter-menu></filter-menu><ui-icon class="ptr" name="pointer"></ui-icon><value-filter-dialog></value-filter-dialog>`;
});

component('filter-menu', `
  :host{display:block;width:196px;height:170px;background:#fff;border:1px solid #b8b8b8;box-shadow:1px 1px 2px rgba(0,0,0,.2);font:10px/20px "Noto Sans",sans-serif;color:#555}
  button{display:flex;align-items:center;width:189px;height:20px;text-align:left}
  .i{width:29px;padding-left:6px;display:flex}
  .t{flex:1}
  .r{width:17px;display:flex}
  hr{height:1px;border:0;background:#c6c6c6;margin:1px 13px 0 28px}
  .off{color:#a8a8a8}.on{background:#d2d2d2}
`, () => {
  const item = (t, icon, sub, c = '') => `<button type="button" class="${c}"><span class="i">${icon ? `<ui-icon name="${icon}"></ui-icon>` : ''}</span><span class="t">${t}</span><span class="r">${sub ? '<ui-icon name="right"></ui-icon>' : ''}</span></button>`;
  return item('Select Field:', '', 1) + '<hr>' + item('Sort A to Z', 'sort-az') + item('Sort Z to A', 'sort-za') + item('More Sort Options...') + '<hr>' +
    item("Clear Filter From 'PRODUCT'", 'clear-filter', 0, 'off') + item('Label Filters', '', 1) + item('Value Filters', '', 1, 'on') + '<hr>' + item('Item Filter...');
});

component('value-filter-dialog', `
  :host{display:block;width:524px;height:109px;background:#f0f0f0;border:1px solid #2f86cc;outline:1px solid #a9cfec;outline-offset:-2px;box-shadow:0 2px 3px rgba(0,0,0,.2);font:9px/12px ${UI};color:#4a4a4a;padding:5px 10px 0}
  header{display:flex;justify-content:space-between;align-items:center;font-size:12px;line-height:16px;padding-right:5px}
  fieldset{border:0;margin:14px 0 0;padding:0;min-width:0}
  legend{display:flex;align-items:center;gap:4px;width:100%;padding:0}
  legend::after{content:"";flex:1;height:1px;background:#b5b5b5}
  .row{display:flex;gap:5px;margin:4px 0 0 8px}
  .sel{position:relative;display:block}
  .sel ui-icon{position:absolute;right:5px;top:7px;pointer-events:none}
  .sel::after{content:"";position:absolute;right:14px;top:1px;width:1px;height:15px;background:#b5b5b5}
  select,input{appearance:none;font:inherit;color:inherit;width:100%;height:17px;margin:0;padding:0 2px;border:1px solid #ababab;border-radius:0;background:#fff;display:block}
  select{background:linear-gradient(#f0f0f0,#f0f0f0) right/14px 100% no-repeat #fff}
  .val{flex:1;position:relative}
  input{padding-left:3px}
  .caret{position:absolute;left:31px;top:3px;width:1px;height:11px;background:#222}
  footer{display:flex;justify-content:flex-end;gap:4px;margin-top:10px}
  footer button{width:68px;height:20px;border:1px solid #ababab}
  footer .ok{border-color:#666}
`, `
  <header><span>Value Filter (PRODUCT)</span><button type="button" aria-label="Close"><ui-icon name="close"></ui-icon></button></header>
  <fieldset><legend>Show items for which</legend>
    <div class="row">
      <span class="sel" style="width:101px"><select aria-label="Value field"><option>Sum of AMOUNT</option></select><ui-icon name="down"></ui-icon></span>
      <span class="sel" style="width:151px"><select aria-label="Condition"><option>is greater than</option></select><ui-icon name="down"></ui-icon></span>
      <span class="val"><input type="text" value="40000" aria-label="Value"><i class="caret"></i></span>
    </div>
  </fieldset>
  <footer><button type="button" class="ok">OK</button><button type="button">Cancel</button></footer>`);
</script>
</body>
</html>
